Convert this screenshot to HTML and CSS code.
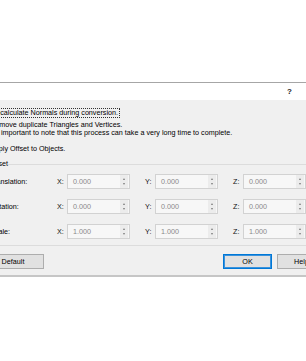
FILE: index.html
```html
<!DOCTYPE html>
<html>
<head>
<meta charset="utf-8">
<link rel="stylesheet" href="styles.css">
</head>
<body>
<div class="page">
  <div class="backdrop"></div>
  <div class="dialog">
    <div class="titlebar"><span class="help-q">?</span></div>
    <div class="content">
      <div class="check-row first">
        <span class="cb checked"></span>
        <span class="focus">Recalculate Normals during conversion.</span>
      </div>
      <div class="check-row">
        <span class="cb"></span>
        <span>Remove duplicate Triangles and Vertices.</span>
      </div>
      <div class="note">It's important to note that this process can take a very long time to complete.</div>
      <div class="check-row apply">
        <span class="cb"></span>
        <span>Apply Offset to Objects.</span>
      </div>
      <fieldset class="group">
        <legend class="group-title">Offset</legend>
        <div class="offset-row">
          <span class="row-label">Translation:</span>
          <div class="axis"><span class="axis-label">X:</span><div class="spin"><span class="val">0.000</span><span class="arrows"><i class="up"></i><i class="down"></i></span></div></div>
          <div class="axis"><span class="axis-label">Y:</span><div class="spin"><span class="val">0.000</span><span class="arrows"><i class="up"></i><i class="down"></i></span></div></div>
          <div class="axis"><span class="axis-label">Z:</span><div class="spin"><span class="val">0.000</span><span class="arrows"><i class="up"></i><i class="down"></i></span></div></div>
        </div>
        <div class="offset-row">
          <span class="row-label">Rotation:</span>
          <div class="axis"><span class="axis-label">X:</span><div class="spin"><span class="val">0.000</span><span class="arrows"><i class="up"></i><i class="down"></i></span></div></div>
          <div class="axis"><span class="axis-label">Y:</span><div class="spin"><span class="val">0.000</span><span class="arrows"><i class="up"></i><i class="down"></i></span></div></div>
          <div class="axis"><span class="axis-label">Z:</span><div class="spin"><span class="val">0.000</span><span class="arrows"><i class="up"></i><i class="down"></i></span></div></div>
        </div>
        <div class="offset-row">
          <span class="row-label">Scale:</span>
          <div class="axis"><span class="axis-label">X:</span><div class="spin"><span class="val">1.000</span><span class="arrows"><i class="up"></i><i class="down"></i></span></div></div>
          <div class="axis"><span class="axis-label">Y:</span><div class="spin"><span class="val">1.000</span><span class="arrows"><i class="up"></i><i class="down"></i></span></div></div>
          <div class="axis"><span class="axis-label">Z:</span><div class="spin"><span class="val">1.000</span><span class="arrows"><i class="up"></i><i class="down"></i></span></div></div>
        </div>
      </fieldset>
      <div class="buttons">
        <button class="btn default-btn">Default</button>
        <span class="spacer"></span>
        <button class="btn ok">OK</button>
        <button class="btn">Help</button>
      </div>
    </div>
  </div>
</div>
</body>
</html>
```
FILE: styles.css
```css
html, body {
  margin: 0;
  padding: 0;
  background: #ffffff;
}
.page {
  width: 306px;
  height: 361px;
  overflow: hidden;
  font-family: "Liberation Sans", Arial, sans-serif;
  font-size: 7.2px;
  line-height: 8px;
  color: #000000;
}
.backdrop {
  height: 82px;
}
.dialog {
  margin-left: -40px;
  width: 390px;
  border-top: 1px solid #a6a6a6;
  border-bottom: 2px solid #c6c6c6;
  background: #f0f0f0;
}
.titlebar {
  height: 17px;
  background: #ffffff;
  display: flex;
  align-items: center;
  padding-left: 327px;
}
.help-q {
  font-weight: bold;
  font-size: 8px;
  color: #222;
}
.content {
  padding: 8px 0 6px 0;
}
.check-row {
  display: flex;
  align-items: center;
  padding-left: 19px;
  gap: 4px;
  height: 8px;
}
.check-row.first {
  height: 10px;
  margin-bottom: 3px;
}
.check-row.apply {
  margin-top: 8px;
}
.cb {
  width: 7px;
  height: 7px;
  box-sizing: border-box;
  border: 1px solid #333;
  background: #fff;
}
.focus {
  border: 1px dotted #333;
  padding: 0 1px 0 0;
  line-height: 8px;
}
.note {
  padding-left: 30px;
}
.group {
  margin: 7px 30px 0 21px;
  padding: 6px 0 6px 8px;
  border: 1px solid #dcdcdc;
}
.group-title {
  padding: 0;
  margin-left: -1px;
  line-height: 8px;
}
.offset-row {
  display: flex;
  align-items: center;
  height: 15px;
  margin-bottom: 10px;
}
.offset-row:last-child {
  margin-bottom: 0;
}
.row-label {
  width: 67px;
}
.axis {
  display: flex;
  align-items: center;
  width: 88px;
}
.axis-label {
  width: 10px;
  color: #111;
}
.spin {
  width: 63px;
  height: 15px;
  box-sizing: border-box;
  border: 1px solid #d2d2d2;
  background: #f7f7f7;
  display: flex;
  align-items: center;
}
.val {
  flex: 1;
  padding-left: 5px;
  color: #8a8a8a;
}
.arrows {
  width: 8px;
  height: 13px;
  margin-right: 1px;
  display: flex;
  flex-direction: column;
  align-items: center;
  justify-content: space-between;
  padding: 3px 0;
  box-sizing: border-box;
  background: #ececec;
}
.up {
  width: 0;
  height: 0;
  border-left: 1.5px solid transparent;
  border-right: 1.5px solid transparent;
  border-bottom: 2px solid #7a7a7a;
}
.down {
  width: 0;
  height: 0;
  border-left: 1.5px solid transparent;
  border-right: 1.5px solid transparent;
  border-top: 2px solid #7a7a7a;
}
.buttons {
  display: flex;
  margin: 8px 0 0 22px;
  gap: 5px;
}
.spacer {
  flex: 1;
}
.btn {
  font-family: "Liberation Sans", Arial, sans-serif;
  font-size: 7.2px;
  color: #000;
  width: 49px;
  height: 15px;
  padding: 0;
  border: 1px solid #adadad;
  background: #e1e1e1;
  box-sizing: border-box;
}
.default-btn {
  width: 62px;
}
.ok {
  border-color: #0078d7;
  box-shadow: inset 0 0 0 1px #3a92dc;
}
.buttons .btn:last-child {
  margin-right: 24px;
}
```
